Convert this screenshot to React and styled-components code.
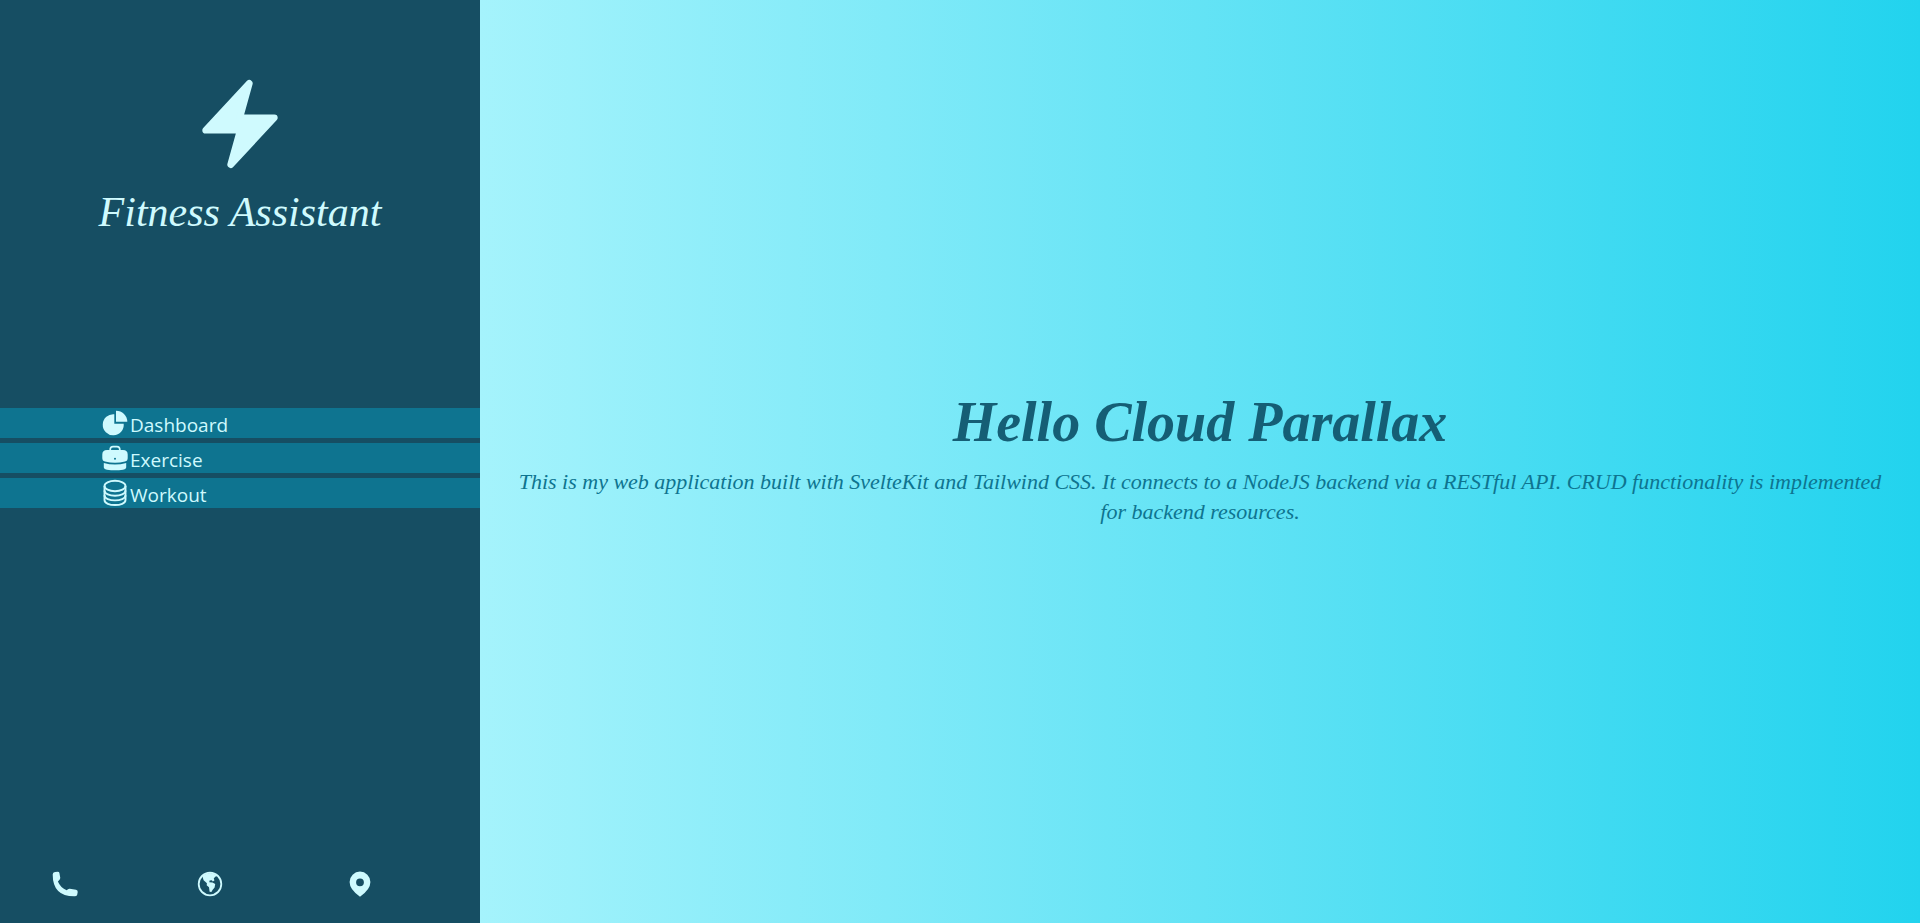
import React from 'react';
import styled, { createGlobalStyle } from 'styled-components';

const GlobalStyle = createGlobalStyle`
  *, *::before, *::after { box-sizing: border-box; }
  body { margin: 0; }
  h1, h2, p, ul { margin: 0; padding: 0; }
`;

const serif = "Georgia, 'Liberation Serif', serif";

const Page = styled.div`
  display: grid;
  grid-template-columns: 1fr 3fr;
  min-height: 100vh;
`;

const Sidebar = styled.aside`
  display: grid;
  grid-template-rows: 1fr auto 1fr;
  background: #164e63;
  color: #cffafe;
`;

const Brand = styled.header`
  display: flex;
  flex-direction: column;
  align-items: center;
  gap: 16px;
  padding-top: 76px;
`;

const BrandName = styled.h2`
  font: italic 400 42px/48px ${serif};
  white-space: nowrap;
`;

const NavList = styled.ul`
  display: grid;
  gap: 5px;
  margin-bottom: 7px;
  list-style: none;
`;

const NavLink = styled.a`
  display: flex;
  align-items: center;
  height: 30px;
  padding-left: 100px;
  background: #0e7490;
  color: inherit;
  text-decoration: none;
`;

const NavLabel = styled.span`
  padding-top: 4px;
  font: 400 19px/26px 'Segoe UI', 'Open Sans', sans-serif;
`;

const Contacts = styled.footer`
  display: grid;
  grid-template-columns: 145px 150px auto;
  align-self: end;
  padding: 0 0 24px 50px;
`;

const ContactLink = styled.a`
  display: flex;
  width: 30px;
  color: inherit;
`;

const Glyph = styled.svg`
  display: block;
  flex: none;
  width: 30px;
  height: 30px;
  fill: currentColor;
`;

const BrandGlyph = styled(Glyph)`
  width: 96px;
  height: 96px;
`;

const Hero = styled.main`
  display: flex;
  flex-direction: column;
  align-items: center;
  justify-content: center;
  gap: 15px;
  padding: 0 32px 5px;
  background: linear-gradient(to right, #a5f3fc, #22d3ee);
  text-align: center;
`;

const Heading = styled.h1`
  font: italic 700 56px/60px ${serif};
  color: #155e75;
`;

const Intro = styled.p`
  font: italic 400 22px/30px ${serif};
  color: #0e7490;
`;

const BoltIcon = () => (
  <BrandGlyph viewBox="0 0 96 96" aria-hidden="true">
    <path
      d="M57.300 7.400L47.700 41.800H82.300L38.700 88.600L48.300 54.200H13.700z"
      stroke="currentColor"
      strokeWidth="6.800"
      strokeLinejoin="round"
    />
  </BrandGlyph>
);

const PieIcon = () => (
  <Glyph viewBox="0 0 30 30" aria-hidden="true">
    <path d="M14.300 6.300V15.700H23.700A10.500 10.500 0 1 1 14.300 6.300z" />
    <path d="M16 2.700A11.200 11 0 0 1 27.300 13.700H16z" />
  </Glyph>
);

const BagIcon = () => (
  <Glyph viewBox="0 0 30 30" aria-hidden="true">
    <path d="M10.200 7.500V6.600Q10.200 3.600 13 3.600h4q2.800 0 2.800 3v.9" fill="none" stroke="currentColor" strokeWidth="1.700" />
    <path fillRule="evenodd" d="M7 7h16q4.700 0 4.700 4.500v3.500q0 3-2.700 3.500Q15 21 5 18.500q-2.700-.5-2.700-3.500v-3.500Q2.300 7 7 7zM15 14.800a1 1 0 1 0 0 2a1 1 0 1 0 0-2z" />
    <path d="M3.800 20Q15 23.200 26.200 20v4.500q-.2 2-3.200 2.300Q15 27.800 7 26.800q-3-.3-3.200-2.300z" />
  </Glyph>
);

const DatabaseIcon = () => (
  <Glyph viewBox="0 0 30 30" aria-hidden="true">
    <g fill="none" stroke="currentColor" strokeWidth="1.900">
      <ellipse cx="15" cy="8" rx="10.500" ry="5.200" />
      <path d="M4.500 8V22C4.500 28.700 25.500 28.700 25.500 22V8" />
      <path d="M4.500 12.500C4.500 19.400 25.500 19.400 25.500 12.500M4.500 17.200C4.500 24.100 25.500 24.100 25.500 17.200" />
    </g>
  </Glyph>
);

const PhoneIcon = () => (
  <Glyph viewBox="0 0 30 30" aria-hidden="true">
    <path d="M5 3L7.800 2.700Q9.200 2.800 9.400 4L10.300 9Q10.400 10.300 7.900 12.500Q10.500 18.800 16.700 21.300Q18 19.600 19.800 19.800L26 20.700Q27.900 21 27.700 23L27.200 25.800Q26.800 27.300 24.500 27.300Q2.700 27.500 2.700 5.500Q2.700 3.200 5 3z" />
  </Glyph>
);

const GlobeIcon = () => (
  <Glyph viewBox="0 0 30 30" aria-hidden="true">
    <circle cx="15" cy="15" r="11.300" fill="none" stroke="currentColor" strokeWidth="1.800" />
    <path d="M7.300 7Q15 .8 22.700 7L20.600 7.600L18.800 9.300L19.400 11.600L17.800 12.400L16.800 11.200L14.600 11.500L14.300 13.300L17.500 13.400L20.200 15L19.600 18.500L17.700 20.700L16.400 23L14.600 22.700L14 18.300L11.700 16.300L11.900 14.300L10.300 12.700L8.600 11.300z" />
  </Glyph>
);

const PinIcon = () => (
  <Glyph viewBox="0 0 30 30" aria-hidden="true">
    <path fillRule="evenodd" d="M15 27.700Q4.600 20.500 4.600 13a10.400 10.400 0 0 1 20.800 0Q25.400 20.500 15 27.700zM15 9.400a3.900 3.900 0 1 0 0 7.800a3.900 3.900 0 1 0 0-7.800z" />
  </Glyph>
);

const navItems = [
  { label: 'Dashboard', Icon: PieIcon },
  { label: 'Exercise', Icon: BagIcon },
  { label: 'Workout', Icon: DatabaseIcon },
];

const contactItems = [
  { label: 'Phone', Icon: PhoneIcon },
  { label: 'Website', Icon: GlobeIcon },
  { label: 'Location', Icon: PinIcon },
];

export default function App() {
  return (
    <Page>
      <GlobalStyle />
      <Sidebar>
        <Brand>
          <BoltIcon />
          <BrandName>Fitness Assistant</BrandName>
        </Brand>
        <nav>
          <NavList>
            {navItems.map(({ label, Icon }) => (
              <li key={label}>
                <NavLink href="#">
                  <Icon />
                  <NavLabel>{label}</NavLabel>
                </NavLink>
              </li>
            ))}
          </NavList>
        </nav>
        <Contacts>
          {contactItems.map(({ label, Icon }) => (
            <ContactLink key={label} href="#" aria-label={label}>
              <Icon />
            </ContactLink>
          ))}
        </Contacts>
      </Sidebar>
      <Hero>
        <Heading>Hello Cloud Parallax</Heading>
        <Intro>
          This is my web application built with SvelteKit and Tailwind CSS. It connects to a NodeJS
          backend via a RESTful API. CRUD functionality is implemented for backend resources.
        </Intro>
      </Hero>
    </Page>
  );
}
